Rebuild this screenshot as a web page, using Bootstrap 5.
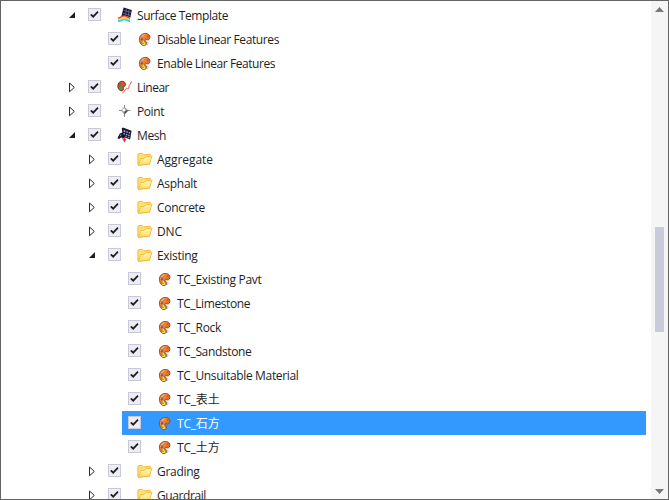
<!DOCTYPE html>
<html lang="en">
<head>
<meta charset="utf-8">
<title>Material tree</title>
<link rel="stylesheet" href="https://cdn.jsdelivr.net/npm/bootstrap@5.3.0/dist/css/bootstrap.min.css">
<style>
body{font:12px/16px "Open Sans","Noto Sans CJK SC",sans-serif;color:#1e1e1e;background:#fff}
.pane{height:500px;border:1px solid #646464}
.tree{padding:2px 5px 0 0}
.tree-row{height:24px}
.lv1{padding-left:64px}.lv2{padding-left:84px}.lv3{padding-left:104px}
.twist{width:17px;height:24px}
.entry{height:24px;padding-left:6px}
.entry.chosen{background:#3399ff;color:#fff}
.tick{width:13px;height:13px;margin-bottom:1px;border:1px solid #c8c8dc;background:#ededf3}
.pic{width:16px;height:24px;margin-left:16px}
.label{margin-left:4px;padding-top:1px}
.scroller{width:17px;background:#f5f5f5;padding:6px 4px 5px}
.thumb{width:9px;height:105px;margin-top:215px;background:#cacbda}
</style>
<script src="https://cdn.jsdelivr.net/npm/bootstrap@5.3.0/dist/js/bootstrap.bundle.min.js"></script>
</head>
<body>
<svg class="position-absolute" width="0" height="0">
<defs>
<linearGradient id="gold" x2="0" y2="1"><stop stop-color="#fffac0"/><stop offset="1" stop-color="#ffdc62"/></linearGradient>
<linearGradient id="rust" x2="1" y2="1"><stop stop-color="#ff9a48"/><stop offset="1" stop-color="#d85208"/></linearGradient>
</defs>
<symbol id="closed" viewBox="0 0 17 24"><path d="M4.5 8v8.8l4.8-4.4z" fill="#fff" stroke="#2a2a2a" stroke-width="1"/></symbol>
<symbol id="open" viewBox="0 0 17 24"><path d="M10 9v6H4z" fill="#1e1e1e"/></symbol>
<symbol id="check" viewBox="0 0 11 11"><path d="M1.8 5.3 4.2 7.7 9 2.6" fill="none" stroke="#1e1e1e" stroke-width="1.7"/></symbol>
<symbol id="folder" viewBox="0 0 16 24"><path d="M.9 17.6V7.2l.6-.6 3.8-.2 1.3 1.4 6.6-.5v2.4L12.6 17l-11 1.4z" fill="#ffe078" stroke="#f3b530" stroke-width=".9"/><path d="M1.5 18.2 3.9 11.6l3.7-.4 1.2-1.5 6.2-.5-2.6 7.8z" fill="url(#gold)" stroke="#f3b530" stroke-width=".8"/></symbol>
<symbol id="palette" viewBox="0 0 16 24"><path d="M2.4 12C2.5 8.4 5.3 6.4 8.4 6.4c3.2 0 4.8 2.1 4.5 4.3-.2 2.2-2.2 2.6-3.7 2-1.3-.2-1.5 1-.4 1.9 1.5 1.2.6 3.9-1.5 4C4.4 18.8 2.3 15.7 2.4 12z" fill="url(#rust)" stroke="#71523a" stroke-width=".9"/><path d="M5 9.4 7.6 7.5" stroke="#ffc57b"/><circle cx="10.8" cy="8.9" r="1" fill="#ef4a13"/><path d="M3.8 12.2 5.8 10.6l.2 1.9-1.7 1.3z" fill="#6c4bb4"/><path d="m6 13.2 2.7 4c-1 1.2-3.1.9-3.8-.3z" fill="#e3f04a"/><circle cx="5.9" cy="16.3" r=".8" fill="#35a832"/><path d="M10 14.7c1.2.7 1.2 2.4.3 3.2" fill="none" stroke="#9a8c80" stroke-width=".7"/></symbol>
<symbol id="surface" viewBox="0 0 16 24"><path d="m4.4 13.2 2.2-8.8 8.2 2.6-1.4 7.4-4.1-1.4z" fill="#15152e"/><path d="m6.5 7.3 7.8 2.2M5.8 10.3l7.8 2M9.5 5.5 8.3 12.5M12.2 6.5l-1 7" stroke="#8585bd" stroke-width=".6"/><path d="M1 15.2c3-.1 3.8-2.4 6.3-2.3 2.4 0 3.2 2.1 5.7 2.4" fill="none" stroke="#ff3928" stroke-width="1.4"/><path d="M1 16.7c3 0 4-1.9 6.3-1.9 2.2.1 3.4 1.7 5.7 1.9" fill="none" stroke="#ffd83d" stroke-width="1.6"/><path d="M1 18.1c3.1-.1 4.1-1.6 6.3-1.6 2 0 3.4 1.5 5.7 1.6" fill="none" stroke="#14dce7" stroke-width="1.6"/></symbol>
<symbol id="linear" viewBox="0 0 16 24"><path d="M.8 11c0-2.8 2-4.8 4.4-4.7 2.6.1 3.7 2 3.1 3.9-.5 1.5-1.6 1.3-2 2.3-.2.9.8 2.2-.6 3-2.2 1.1-4.9-1.2-4.9-4.5z" fill="#c05c1e" stroke="#533524" stroke-width=".9"/><circle cx="5.8" cy="8.6" r="1.5" fill="#f24c1c"/><circle cx="2.9" cy="9.5" r="1" fill="#4c62d0"/><circle cx="3.6" cy="13" r="1.4" fill="#38ad2b"/><path d="M15 6.5c-1.9.7-1 2.3-2.2 3.2-1 .8-.8 1.8-.9 3.1-.4 1.6-2.1.3-3.3 1.5-1 1-.9 2.3-3.2 3.5" fill="none" stroke="#ee4148" stroke-width="1"/></symbol>
<symbol id="point" viewBox="0 0 16 24"><path d="M7.5 6v12M2 11.5h11.5" stroke="#888" stroke-width="1"/><path d="m7.5 7.8 3.7 3.7-3.7 3.9-3.7-3.9z" fill="#999"/><path d="m7.5 15.4 3.7-3.9H7.5z" fill="#444"/><circle cx="7" cy="11" r="1.6" fill="#fff"/></symbol>
<symbol id="mesh" viewBox="0 0 16 24"><path d="m.4 15.2 2.4-4.7 2.6-1.1-.7-3.9 1.2-.9 8.7 3.2-1.5 8.7-5.2-2.1-2.3 1.4-1.2-1.6-2.2 1.9z" fill="#17172f"/><path d="m6.7 7.1 1.8.5-.3 1.7-1.6-.5zM9.5 8l1.4.4-.3 1.6-1.4-.4zM11.9 8.8l1.4.4-.3 1.4-1.3-.4zM6.5 9.9l1.6.5-.3 1.4-1.5-.5zM9.1 10.7l1.3.4-.3 1.5-1.3-.4zM11.5 11.4l1.3.4-.3 1.5-1.3-.4zM8.6 13l1.3.4-.2 1-1.3-.4zM11 13.8l1.3.4-.2 1-1.3-.4zM3.4 11.8l1-.5-.4 1.4-1.2.7z" fill="#a9a9d8"/><path d="M7.5 14.3v3" stroke="#ee2028" stroke-width="1.5"/><path d="M5.5 16.2h4l-2 3z" fill="#ee2028"/></symbol>
</svg>
<div class="pane d-flex overflow-hidden">
<main class="tree flex-grow-1" id="tree"></main>
<aside class="scroller d-flex flex-column align-items-center">
<svg width="9" height="5"><path d="M4.5 0 9 5H0z" fill="#777"/></svg>
<div class="thumb"></div>
<svg class="mt-auto" width="9" height="5"><path d="M0 0h9L4.5 5z" fill="#777"/></svg>
</aside>
</div>
<script>
// level, expander, icon, label, label width in px, selected
const rows = [
[1,'open','surface','Surface Template',91],
[2,'','palette','Disable Linear Features',122],
[2,'','palette','Enable Linear Features',118],
[1,'closed','linear','Linear',32],
[1,'closed','point','Point',27],
[1,'open','mesh','Mesh',29],
[2,'closed','folder','Aggregate',56],
[2,'closed','folder','Asphalt',40],
[2,'closed','folder','Concrete',48],
[2,'closed','folder','DNC',25],
[2,'open','folder','Existing',40.5],
[3,'','palette','TC_Existing Pavt',84.5],
[3,'','palette','TC_Limestone',73],
[3,'','palette','TC_Rock',44],
[3,'','palette','TC_Sandstone',74.5],
[3,'','palette','TC_Unsuitable Material',121.5],
[3,'','palette','TC_表土',42.5],
[3,'','palette','TC_石方',42.5,true],
[3,'','palette','TC_土方',42.5],
[2,'closed','folder','Grading',42.5],
[2,'closed','folder','Guardrail',49]
];
const tree = document.getElementById('tree');
tree.innerHTML = rows.map(([level, twist, icon, label, width, chosen]) =>
`<div class="tree-row d-flex lv${level}">
<svg class="twist flex-shrink-0">${twist ? `<use href="#${twist}"/>` : ''}</svg>
<div class="entry d-flex align-items-center flex-grow-1${chosen ? ' chosen' : ''}">
<span class="tick d-flex"><svg width="11" height="11"><use href="#check"/></svg></span>
<svg class="pic"><use href="#${icon}"/></svg>
<span class="label text-nowrap" data-width="${width}">${label}</span>
</div></div>`).join('');
tree.querySelectorAll('.label').forEach(el => {
  const gap = (el.dataset.width - el.getBoundingClientRect().width) / el.textContent.length;
  el.style.letterSpacing = gap.toFixed(3) + 'px';
});
</script>
</body>
</html>
